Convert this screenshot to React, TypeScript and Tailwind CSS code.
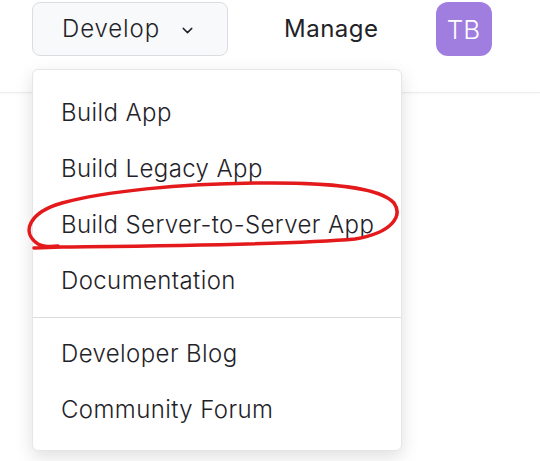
import { ChevronDown } from "lucide-react";

/* ============================================
   Dropdown menu
============================================ */

const buildLinks = [
  "Build App",
  "Build Legacy App",
  "Build Server-to-Server App",
  "Documentation",
];

const communityLinks = ["Developer Blog", "Community Forum"];

function MenuItem({ label }: { label: string }) {
  return (
    <div className="h-14 flex items-center pl-[28px] whitespace-nowrap text-[24px] font-light tracking-[0.4px] text-[#1f2328]">
      {label}
    </div>
  );
}

function DevelopMenu() {
  return (
    <div className="absolute left-8 top-[69px] w-[370px] bg-white border border-[#e6e6e6] rounded-md shadow-[0_6px_18px_rgba(0,0,0,0.13)] pt-[15px] pb-3">
      {buildLinks.map((l) => (
        <MenuItem key={l} label={l} />
      ))}
      <div className="my-2 border-t border-[#dcdcdc]" />
      {communityLinks.map((l) => (
        <MenuItem key={l} label={l} />
      ))}
    </div>
  );
}

/* ============================================
   Hand drawn highlight
============================================ */

function Highlight() {
  return (
    <svg
      className="absolute inset-0 pointer-events-none"
      width="540"
      height="461"
      viewBox="0 0 540 461"
    >
      <path
        d="M 34 248 L 62 247 C 150 246, 290 245, 355 239 C 392 233, 403 216, 394 203 C 380 187, 330 182, 255 183 C 180 184, 105 191, 62 203 C 30 212, 20 232, 38 244 C 44 247, 50 247, 58 246"
        fill="none"
        stroke="#e3191b"
        strokeWidth="3.5"
        strokeLinecap="round"
        strokeLinejoin="round"
      />
    </svg>
  );
}

/* ============================================
   App Root
============================================ */

export default function App() {
  return (
    <div
      className="relative w-[540px] h-[461px] bg-white overflow-hidden"
      style={{ fontFamily: "Inter, 'Noto Sans', sans-serif" }}
    >
      <header className="h-[93px] border-b border-[#ededed] shadow-[0_1px_3px_rgba(0,0,0,0.03)]">
        <div className="flex items-center pt-[2px] pl-8">
          <button className="h-[54px] w-[196px] flex items-center pl-[29px] gap-[19px] bg-[#f8f9fa] border border-[#dcdde0] rounded-lg text-[24px] font-light tracking-[0.9px] text-[#1f2328]">
            Develop
            <ChevronDown size={17} strokeWidth={2} className="text-[#1f2328] mt-[2px]" />
          </button>
          <span className="ml-[56px] text-[24px] font-normal tracking-[0.5px] text-[#1f2328]">Manage</span>
          <div className="ml-[57px] w-[56px] h-[54px] rounded-xl bg-[#a07ee0] flex items-center justify-center text-white text-[26px] font-light">
            TB
          </div>
        </div>
      </header>
      <DevelopMenu />
      <Highlight />
    </div>
  );
}
